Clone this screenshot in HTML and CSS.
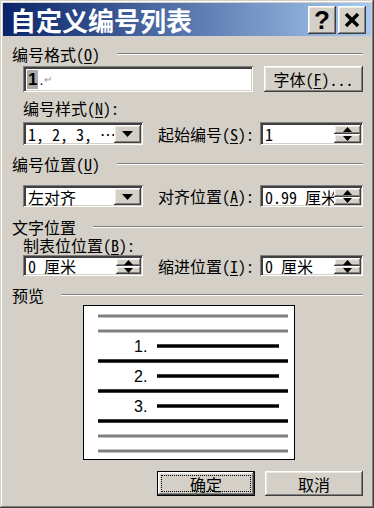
FILE: index.html
```html
<!DOCTYPE html>
<html lang="zh-CN">
<head>
<meta charset="utf-8">
<title>自定义编号列表</title>
<link rel="stylesheet" href="styles.css">
</head>
<body>
<div class="dialog">
  <div class="titlebar">
    <span class="title">自定义编号列表</span>
    <div class="tbtns">
      <div class="tbtn raised help">?</div>
      <div class="tbtn raised"><svg width="16" height="16" viewBox="0 0 16 16"><path d="M2 2L14 14M14 2L2 14" stroke="#000" stroke-width="3.4"/></svg></div>
    </div>
  </div>
  <div class="content">
    <div class="group g1"><span class="glabel">编号格式(<u>O</u>)</span><i class="etch"></i></div>
    <div class="row row-format">
      <div class="field sunken"><span class="sel">1</span><span class="dot">.</span><span class="ret">↵</span></div>
      <div class="btn raised fontbtn">字体(<u>F</u>)...</div>
    </div>
    <div class="sublabel sl1">编号样式(<u>N</u>):</div>
    <div class="row ctl r2">
      <div class="combo sunken"><span class="val">1, 2, 3, ⋯</span><span class="dd raised"><svg width="11" height="6" viewBox="0 0 11 6"><path d="M0 0H11L5.5 6Z" fill="#000"/></svg></span></div>
      <span class="clabel">起始编号(<u>S</u>):</span>
      <div class="spin sunken wide"><span class="val">1</span><span class="spinbtns"><span class="sb raised"><svg width="9" height="5" viewBox="0 0 9 5"><path d="M0 5H9L4.5 0Z" fill="#000"/></svg></span><span class="sb raised"><svg width="9" height="5" viewBox="0 0 9 5"><path d="M0 0H9L4.5 5Z" fill="#000"/></svg></span></span></div>
    </div>
    <div class="group g2"><span class="glabel">编号位置(<u>U</u>)</span><i class="etch"></i></div>
    <div class="row ctl r3">
      <div class="combo sunken"><span class="val">左对齐</span><span class="dd raised"><svg width="11" height="6" viewBox="0 0 11 6"><path d="M0 0H11L5.5 6Z" fill="#000"/></svg></span></div>
      <span class="clabel">对齐位置(<u>A</u>):</span>
      <div class="spin sunken wide"><span class="val">0.99 厘米</span><span class="spinbtns"><span class="sb raised"><svg width="9" height="5" viewBox="0 0 9 5"><path d="M0 5H9L4.5 0Z" fill="#000"/></svg></span><span class="sb raised"><svg width="9" height="5" viewBox="0 0 9 5"><path d="M0 0H9L4.5 5Z" fill="#000"/></svg></span></span></div>
    </div>
    <div class="group g3"><span class="glabel">文字位置</span><i class="etch"></i></div>
    <div class="sublabel sl2">制表位位置(<u>B</u>):</div>
    <div class="row ctl r4">
      <div class="spin sunken narrow"><span class="val">0 厘米</span><span class="spinbtns"><span class="sb raised"><svg width="9" height="5" viewBox="0 0 9 5"><path d="M0 5H9L4.5 0Z" fill="#000"/></svg></span><span class="sb raised"><svg width="9" height="5" viewBox="0 0 9 5"><path d="M0 0H9L4.5 5Z" fill="#000"/></svg></span></span></div>
      <span class="clabel">缩进位置(<u>I</u>):</span>
      <div class="spin sunken wide"><span class="val">0 厘米</span><span class="spinbtns"><span class="sb raised"><svg width="9" height="5" viewBox="0 0 9 5"><path d="M0 5H9L4.5 0Z" fill="#000"/></svg></span><span class="sb raised"><svg width="9" height="5" viewBox="0 0 9 5"><path d="M0 0H9L4.5 5Z" fill="#000"/></svg></span></span></div>
    </div>
    <div class="group g4"><span class="glabel">预览</span><i class="etch"></i></div>
    <div class="preview">
      <svg width="210" height="153" viewBox="0 0 210 153">
        <g stroke="#808080" stroke-width="3">
          <line x1="14" y1="10" x2="204" y2="10"/>
          <line x1="14" y1="25" x2="204" y2="25"/>
          <line x1="14" y1="130" x2="204" y2="130"/>
          <line x1="14" y1="145" x2="204" y2="145"/>
        </g>
        <g stroke="#000" stroke-width="3.6">
          <line x1="73" y1="40" x2="195" y2="40"/>
          <line x1="14" y1="55" x2="204" y2="55"/>
          <line x1="73" y1="70" x2="195" y2="70"/>
          <line x1="14" y1="85" x2="204" y2="85"/>
          <line x1="73" y1="100" x2="195" y2="100"/>
          <line x1="14" y1="115" x2="204" y2="115"/>
        </g>
        <g class="pnum">
          <text x="50" y="46">1.</text>
          <text x="50" y="76">2.</text>
          <text x="50" y="106">3.</text>
        </g>
      </svg>
    </div>
    <div class="actions">
      <div class="btn raised default">确定</div>
      <div class="btn raised">取消</div>
    </div>
  </div>
</div>
</body>
</html>
```

FILE: styles.css
```css
* { box-sizing: border-box; }
html, body { margin: 0; padding: 0; }
body {
  width: 374px;
  height: 508px;
  overflow: hidden;
  background: #d4d0c8;
  color: #000;
  font-family: "Noto Sans Mono CJK SC", "Noto Sans CJK SC", "Liberation Sans", sans-serif;
  font-size: 16px;
  line-height: 1;
}
u { text-decoration: underline; text-underline-offset: 2px; }

.dialog {
  width: 374px;
  height: 508px;
  padding: 3px;
  background: #d4d0c8;
  box-shadow: inset -1px -1px #404040, inset 1px 1px #d4d0c8, inset -2px -2px #808080, inset 2px 2px #fff;
  display: flex;
  flex-direction: column;
}

.raised {
  background: #d4d0c8;
  box-shadow: inset -1px -1px #404040, inset 1px 1px #fff, inset -2px -2px #808080, inset 2px 2px #ecebe7;
}
.sunken {
  background: #fff;
  box-shadow: inset 1px 1px #808080, inset -1px -1px #fff, inset 3px 3px #404040, inset -2px -2px #d4d0c8;
}

/* title bar */
.titlebar {
  flex: none;
  height: 33px;
  background: linear-gradient(to right, #0a246a, #a6caf0);
  display: flex;
  align-items: center;
  justify-content: space-between;
  padding: 0 5px 0 7px;
}
.title {
  color: #fff;
  font-family: "Noto Sans CJK SC", sans-serif;
  font-size: 26px;
  font-weight: bold;
  line-height: 33px;
}
.tbtns { display: flex; gap: 2px; }
.tbtn {
  width: 28px;
  height: 28px;
  display: flex;
  align-items: center;
  justify-content: center;
}
.help {
  font-family: "Liberation Sans", sans-serif;
  font-weight: bold;
  font-size: 26px;
  padding-top: 1px;
}

/* content */
.content {
  flex: 1;
  display: flex;
  flex-direction: column;
  padding: 0 8px 0 9px;
}
.group {
  display: flex;
  align-items: center;
  gap: 17px;
  height: 20px;
}
.etch {
  flex: 1;
  height: 2px;
  border-top: 1px solid #808080;
  border-bottom: 1px solid #fff;
}
.g1 { margin-top: 8px; }
.g2 { margin-top: 9px; }
.g3 { margin-top: 11px; height: 18px; }
.g4 { margin-top: 9px; }

.row { display: flex; align-items: stretch; margin-left: 11px; }
.row-format { margin-top: 2px; height: 26px; gap: 11px; }
.field {
  width: 230px;
  display: flex;
  align-items: center;
  padding: 3px 2px 2px 4px;
}
.sel {
  background: #a9a9a9;
  font-family: "Liberation Sans", sans-serif;
  font-weight: bold;
  font-size: 17px;
  padding: 1px 1px 0;
  line-height: 18px;
}
.dot { font-family: "Liberation Sans", sans-serif; font-size: 14px; margin-left: 1px; }
.ret { color: #9a9a9a; font-size: 10px; margin-left: 1px; margin-top: -2px; }

.btn {
  display: flex;
  align-items: center;
  justify-content: center;
}
.fontbtn { width: 99px; }

.sublabel { margin-left: 11px; height: 20px; display: flex; align-items: center; }
.sl1 { margin-top: 6px; }
.sl2 { height: 18px; }

.ctl { gap: 0; }
.r2 { margin-top: 4px; height: 23px; }
.r3 { margin-top: 11px; height: 22px; }
.r4 { margin-top: 1px; height: 21px; }

.combo, .spin {
  display: flex;
  align-items: stretch;
  padding: 3px 2px 2px 3px;
}
.combo { width: 120px; }
.spin.narrow { width: 120px; }
.spin.wide { width: 103px; }
.val {
  flex: 1;
  min-width: 0;
  display: flex;
  align-items: center;
  padding-left: 2px;
  white-space: pre;
}
.dd {
  flex: none;
  width: 27px;
  display: flex;
  align-items: center;
  justify-content: center;
}
.clabel {
  flex: 1;
  margin-left: 15px;
  display: flex;
  align-items: center;
  white-space: nowrap;
}
.spinbtns {
  flex: none;
  width: 27px;
  display: flex;
  flex-direction: column;
}
.sb {
  flex: 1;
  display: flex;
  align-items: center;
  justify-content: center;
}
.narrow .spinbtns { width: 25px; }

.preview {
  margin-left: 71px;
  width: 212px;
  height: 155px;
  background: #fff;
  border: 1px solid #000;
}
.preview svg { display: block; }
.pnum text {
  font-family: "Liberation Sans", sans-serif;
  font-size: 16px;
  fill: #000;
}

.actions {
  margin-top: 11px;
  height: 25px;
  display: flex;
  justify-content: flex-end;
  gap: 10px;
}
.actions .btn { width: 98px; }
.default {
  position: relative;
  box-shadow: inset 0 0 0 1px #000, inset -2px -2px #404040, inset 2px 2px #fff, inset -3px -3px #808080, inset 3px 3px #ecebe7;
}
.default::after {
  content: "";
  position: absolute;
  inset: 4px;
  border: 1px dotted #000;
}
```
